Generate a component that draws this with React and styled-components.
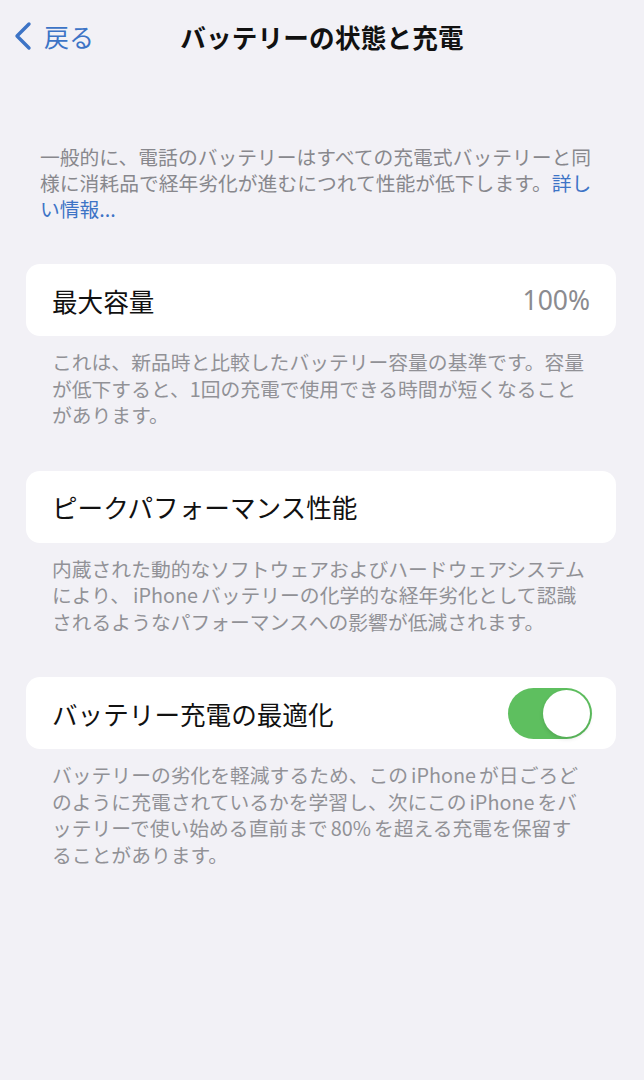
import styled, { createGlobalStyle } from "styled-components";

const GlobalStyle = createGlobalStyle`
  html, body {
    margin: 0;
    padding: 0;
    background: #f2f1f6;
  }
  body {
    font-family: "Noto Sans CJK JP", "Noto Sans", sans-serif;
    -webkit-font-smoothing: antialiased;
  }
`;

const Screen = styled.div`
  width: 644px;
  min-height: 1080px;
  background: #f2f1f6;
  display: flex;
  flex-direction: column;
`;

const NavBar = styled.header`
  height: 72px;
  display: grid;
  grid-template-columns: 120px 1fr 120px;
  align-items: center;
`;

const BackButton = styled.a`
  display: flex;
  align-items: center;
  gap: 11px;
  padding-left: 13px;
  color: #3d74c6;
  font-size: 25px;
  text-decoration: none;
  & > svg {
    width: 20px;
    height: 30px;
  }
`;

const Title = styled.h1`
  margin: 0;
  text-align: center;
  font-size: 25.6px;
  font-weight: 700;
  color: #111;
  letter-spacing: 0.2px;
`;

const Intro = styled.p`
  margin: 72px 0 0;
  padding: 0 40px;
  width: 564px;
  font-size: 19.8px;
  line-height: 26px;
  color: #88888d;
  & a {
    color: #3d74c6;
    text-decoration: none;
  }
`;

const Section = styled.section`
  margin-top: 42px;
  display: flex;
  flex-direction: column;
`;

const Card = styled.div`
  margin: 0 28px 0 26px;
  height: 72px;
  padding: 0 26px;
  background: #fff;
  border-radius: 14px;
  display: flex;
  align-items: center;
  justify-content: space-between;
`;

const Label = styled.span`
  font-size: 25.6px;
  color: #111;
`;

const Value = styled.span`
  font-family: "Noto Sans", "Noto Sans CJK JP", sans-serif;
  font-size: 26.5px;
  color: #8b8b8f;
`;

const Footer = styled.p`
  margin: 13px 0 0;
  padding: 0 52px;
  width: 538px;
  font-size: 19.8px;
  line-height: 26.5px;
  color: #919196;
`;

// latin runs inside japanese text get a little air on both sides
const Latin = styled.span`
  margin: 0 3px;
`;

const Toggle = styled.div`
  width: 84px;
  height: 51px;
  border-radius: 26px;
  background: ${(p) => (p.$on ? "#5ebf5f" : "#e4e4e9")};
  display: flex;
  align-items: center;
  justify-content: ${(p) => (p.$on ? "flex-end" : "flex-start")};
  padding: 0 2px;
  box-sizing: border-box;
  margin-right: -2px;
`;

const Knob = styled.div`
  width: 47px;
  height: 47px;
  border-radius: 50%;
  background: #fff;
  box-shadow: 0 2px 4px rgba(0, 0, 0, 0.12);
`;

function Chevron() {
  return (
    <svg viewBox="0 0 20 30" fill="none">
      <path
        d="M16 3 L4 15 L16 27"
        stroke="currentColor"
        strokeWidth="3.4"
        strokeLinecap="round"
        strokeLinejoin="round"
      />
    </svg>
  );
}

export default function App() {
  return (
    <Screen>
      <GlobalStyle />
      <NavBar>
        <BackButton href="#">
          <Chevron />
          戻る
        </BackButton>
        <Title>バッテリーの状態と充電</Title>
        <span />
      </NavBar>

      <Intro>
        一般的に、電話のバッテリーはすべての充電式バッテリーと同様に消耗品で経年劣化が進むにつれて性能が低下します。
        <a href="#">詳しい情報...</a>
      </Intro>

      <Section>
        <Card>
          <Label>最大容量</Label>
          <Value>100%</Value>
        </Card>
        <Footer>
          これは、新品時と比較したバッテリー容量の基準です。容量が低下すると、1回の充電で使用できる時間が短くなることがあります。
        </Footer>
      </Section>

      <Section>
        <Card>
          <Label>ピークパフォーマンス性能</Label>
        </Card>
        <Footer>
          内蔵された動的なソフトウェアおよびハードウェアシステムにより、<Latin>iPhone</Latin>バッテリーの化学的な経年劣化として認識されるようなパフォーマンスへの影響が低減されます。
        </Footer>
      </Section>

      <Section>
        <Card>
          <Label>バッテリー充電の最適化</Label>
          <Toggle $on>
            <Knob />
          </Toggle>
        </Card>
        <Footer>
          バッテリーの劣化を軽減するため、この<Latin>iPhone</Latin>が日ごろどのように充電されているかを学習し、次にこの<Latin>iPhone</Latin>をバッテリーで使い始める直前まで<Latin>80%</Latin>を超える充電を保留することがあります。
        </Footer>
      </Section>
    </Screen>
  );
}
